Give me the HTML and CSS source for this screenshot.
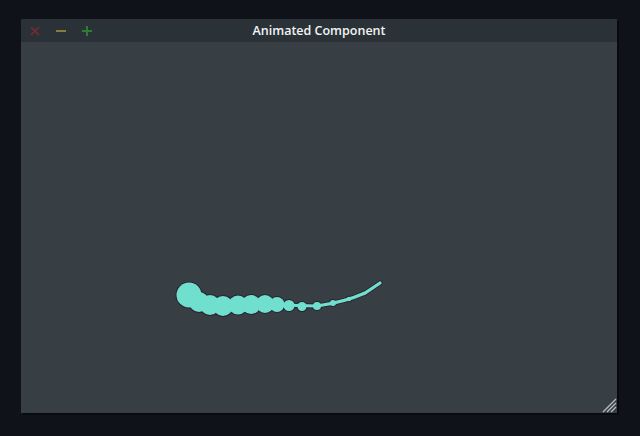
FILE: index.html
```html
<!DOCTYPE html>
<html>
<head>
<meta charset="utf-8">
<link rel="stylesheet" href="styles.css">
</head>
<body>
<div class="window">
  <div class="titlebar">
    <div class="controls">
      <svg class="ctl" width="14" height="14" viewBox="0 0 14 14"><path d="M3 3 L11 11 M11 3 L3 11" stroke="#7b2a33" stroke-width="1.6"/></svg>
      <svg class="ctl" width="14" height="14" viewBox="0 0 14 14"><path d="M2 7 H12" stroke="#8c7c3c" stroke-width="2"/></svg>
      <svg class="ctl" width="14" height="14" viewBox="0 0 14 14"><path d="M2 7 H12 M7 2 V12" stroke="#2f7d31" stroke-width="2"/></svg>
    </div>
    <div class="title">Animated Component</div>
  </div>
  <div class="content">
    <svg class="canvas" width="596" height="371" viewBox="21 42 596 371">
      <path class="trail-outline" d="M280 305 L317 306 Q345 302 365 293 L380 283"/>
      <g class="outline">
        <circle cx="189" cy="295" r="13.5"/>
        <circle cx="199" cy="302" r="11"/>
        <circle cx="210" cy="305" r="11"/>
        <circle cx="223" cy="306" r="11"/>
        <circle cx="238" cy="305" r="10.5"/>
        <circle cx="251" cy="304.5" r="10.5"/>
        <circle cx="265" cy="304" r="10"/>
        <circle cx="277" cy="304.5" r="8.5"/>
        <circle cx="289" cy="305.5" r="6.5"/>
        <circle cx="302" cy="306.5" r="5.5"/>
        <circle cx="317" cy="306" r="5"/>
        <circle cx="333" cy="303" r="4"/>
        <circle cx="349" cy="299" r="3.2"/>
        <circle cx="364" cy="293.5" r="2.8"/>
      </g>
      <path class="trail" d="M280 305 L317 306 Q345 302 365 293 L380 283"/>
      <g class="fill">
        <circle cx="189" cy="295" r="12.5"/>
        <circle cx="199" cy="302" r="10"/>
        <circle cx="210" cy="305" r="10"/>
        <circle cx="223" cy="306" r="10"/>
        <circle cx="238" cy="305" r="9.5"/>
        <circle cx="251" cy="304.5" r="9.5"/>
        <circle cx="265" cy="304" r="9"/>
        <circle cx="277" cy="304.5" r="7.5"/>
        <circle cx="289" cy="305.5" r="5.5"/>
        <circle cx="302" cy="306.5" r="4.5"/>
        <circle cx="317" cy="306" r="4"/>
        <circle cx="333" cy="303" r="3"/>
        <circle cx="349" cy="299" r="2.2"/>
        <circle cx="364" cy="293.5" r="1.8"/>
      </g>
    </svg>
    <svg class="grip" width="16" height="16" viewBox="0 0 16 16">
      <path d="M15 2 L2 15 M15 6 L6 15 M15 10 L10 15" stroke="#b8bcc0" stroke-width="1.3"/>
    </svg>
  </div>
</div>
</body>
</html>
```

FILE: styles.css
```css
html, body {
  margin: 0;
  padding: 0;
  background: #0f1218;
  width: 640px;
  height: 436px;
  overflow: hidden;
}
.window {
  margin: 19px 0 0 21px;
  width: 596px;
  height: 394px;
  display: flex;
  flex-direction: column;
  background: #373f45;
  box-shadow: 2px 2px 0 #080a0e;
}
.titlebar {
  height: 23px;
  flex: 0 0 23px;
  background: #2b3237;
  position: relative;
  display: flex;
  align-items: center;
}
.controls {
  display: flex;
  gap: 12px;
  padding-left: 7px;
  align-items: center;
}
.ctl {
  display: block;
}
.title {
  position: absolute;
  left: 0;
  right: 0;
  top: 0;
  line-height: 23px;
  text-align: center;
  color: #f2f4f5;
  font-family: "Open Sans", "DejaVu Sans", sans-serif;
  font-weight: 600;
  font-size: 12.5px;
}
.content {
  flex: 1;
  position: relative;
}
.canvas {
  display: block;
}
.trail {
  fill: none;
  stroke: #70dfce;
  stroke-width: 3.2;
  stroke-linecap: round;
}
.trail-outline {
  fill: none;
  stroke: #2a2430;
  stroke-width: 5;
  stroke-linecap: round;
}
.outline circle {
  fill: #2a2430;
}
.fill circle {
  fill: #70dfce;
}
.grip {
  position: absolute;
  right: 0;
  bottom: 0;
}
```
